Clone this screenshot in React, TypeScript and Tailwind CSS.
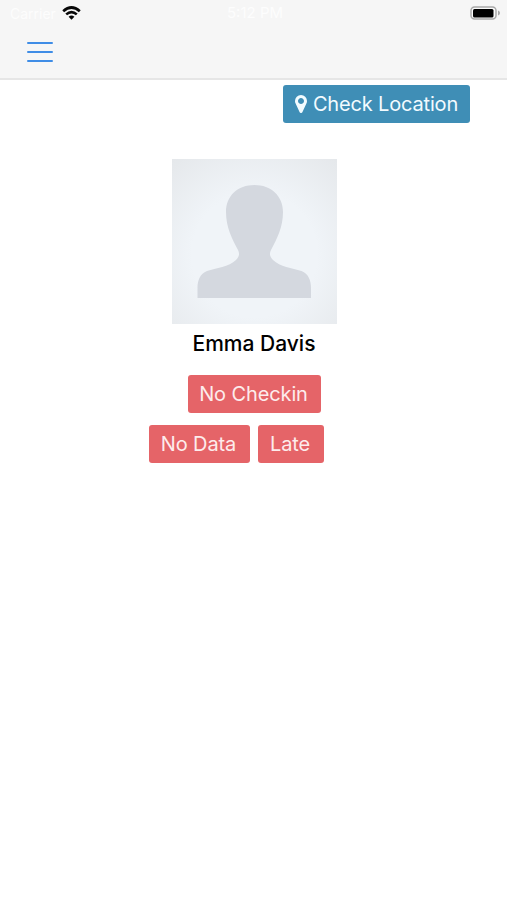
import type { ReactNode } from 'react';

const STATUS_ROWS = [
  { labels: ['No Checkin'], widths: ['w-[133px]'], offset: 'ml-[188px]' },
  { labels: ['No Data', 'Late'], widths: ['w-[101px]', 'w-[66px]'], offset: 'ml-[149px]' },
];

export default function App() {
  return (
    <div className="min-h-[900px] w-full bg-white font-['Inter','Liberation_Sans',sans-serif] text-black">
      <header className="flex h-20 flex-col border-b-2 border-[#e6e6e6] bg-[#f6f6f6]">
        <StatusBar />
        <button className="mt-[15px] ml-[27px] flex w-[26px] flex-col gap-[7px]" aria-label="Menu">
          <span className="h-[2px] w-full rounded-full bg-[#3f8de6]" />
          <span className="h-[2px] w-full rounded-full bg-[#3f8de6]" />
          <span className="h-[2px] w-full rounded-full bg-[#3f8de6]" />
        </button>
      </header>

      <main>
        <div className="flex justify-end pt-[5px] pr-[37px]">
          <ActionButton className="w-[187px] gap-[6px] bg-[#3f8eb6] text-[#f2fbff]">
            <MapMarker />
            <span className="tracking-[-0.16px]">Check Location</span>
          </ActionButton>
        </div>

        <section className="mt-[36px] flex flex-col items-center pl-px">
          <Avatar />
          <h1 className="mt-[6px] h-7 text-[21px] leading-7 font-medium">Emma Davis</h1>
        </section>

        <div className="mt-[17px] flex flex-col gap-3">
          {STATUS_ROWS.map((row) => (
            <div key={row.labels[0]} className={`flex gap-2 ${row.offset}`}>
              {row.labels.map((label, i) => (
                <ActionButton
                  key={label}
                  className={`bg-[#e56468] pr-[2px] tracking-[-0.12px] text-[#fdecec] ${row.widths[i]}`}
                >
                  {label}
                </ActionButton>
              ))}
            </div>
          ))}
        </div>
      </main>
    </div>
  );
}

function StatusBar() {
  return (
    <div className="flex h-[27px] items-center justify-between pr-[7px] pl-[10px] text-[15px] text-[#fdfdfd]">
      <div className="flex w-[200px] items-center">
        <span className="w-[52px] text-[14px]">Carrier</span>
        <svg className="mb-[2px] h-[14px] w-[19px]" viewBox="0 0 19 14" fill="none" stroke="#080808">
          <path d="M1.2 5.2Q9.5-2.2 17.8 5.2" strokeWidth="2.7" />
          <path d="M4.2 8.4Q9.5 3.7 14.8 8.4" strokeWidth="2.6" />
          <path d="M9.5 13.8 6.6 10.8Q9.5 8.4 12.4 10.8Z" fill="#080808" stroke="none" />
        </svg>
      </div>
      <span className="w-[62px] text-center whitespace-nowrap">5:12 PM</span>
      <div className="flex w-[200px] justify-end">
        <svg className="mb-[2px] h-[14px] w-[30px]" viewBox="0 0 30 14">
          <rect x="1" y="1" width="25" height="12" rx="3.5" fill="#fafafa" stroke="#a9a9a9" strokeWidth="1.5" />
          <rect x="3" y="3" width="20.5" height="8.5" rx="1.5" fill="#000" />
          <path d="M28 4.5q2 .8 2 2.5t-2 2.5Z" fill="#a9a9a9" />
        </svg>
      </div>
    </div>
  );
}

function ActionButton({ className, children }: { className: string; children: ReactNode }) {
  return (
    <button
      className={`flex h-[38px] items-center justify-center rounded-[3px] text-[20px] whitespace-nowrap ${className}`}
    >
      {children}
    </button>
  );
}

function MapMarker() {
  return (
    <svg className="h-[18px] w-[12px]" viewBox="0 128 1024 1536" fill="currentColor">
      <path d="M768 640q0-106-75-181t-181-75-181 75-75 181 75 181 181 75 181-75 75-181zm256 0q0 109-33 179l-364 774q-16 33-47.5 52t-67.5 19-67.5-19-46.5-52l-365-774q-33-70-33-179 0-212 150-362t362-150 362 150 150 362z" />
    </svg>
  );
}

function Avatar() {
  return (
    <svg className="h-[165px] w-[165px]" viewBox="0 0 165 165">
      <defs>
        <radialGradient id="avatar-bg" cx="50%" cy="58%" r="76%">
          <stop offset="0.5" stopColor="#f0f4f8" />
          <stop offset="1" stopColor="#e5e8eb" />
        </radialGradient>
      </defs>
      <rect width="165" height="165" fill="url(#avatar-bg)" />
      <path
        d="M82.5 26C65.500 26 54 37 54 53C54 68 60 80 66 91C68 95 67 98 64 101C57 108 44 109 35 112C28 115 25.500 121 25.500 129V139H139V129C139 121 136.500 115 129.500 112C120 109 108 108 101 101C98 98 97 95 99 91C105 80 111 68 111 53C111 37 99 26 82.5 26Z"
        fill="#d4d8df"
      />
    </svg>
  );
}
